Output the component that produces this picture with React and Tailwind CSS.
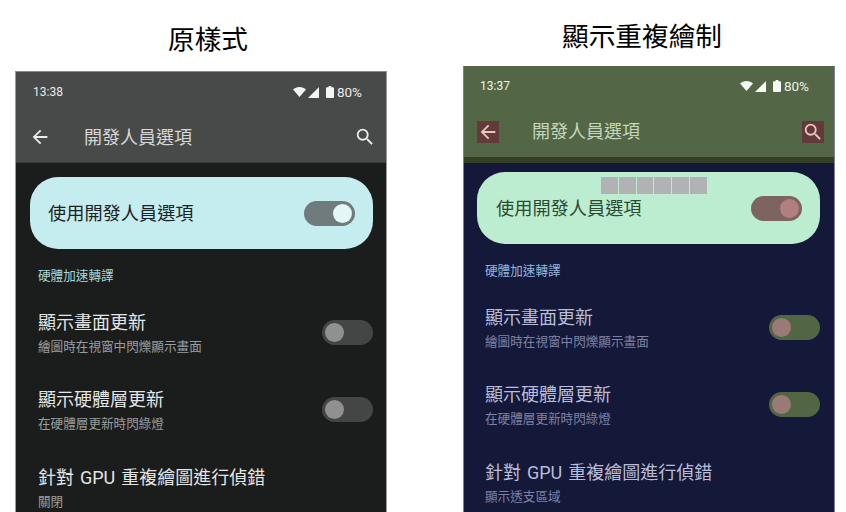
const CJK = { fontFamily: '"Roboto","Noto Sans CJK TC",sans-serif' };

const themes = {
  left: {
    frame: "border-x border-t border-x-[#9a9b9b] border-t-[#8a8b8b]",
    header: "bg-[#484a49] h-[90px]", body: "bg-[#1b1d1c]", status: "text-[#ebebeb]", iconFill: "#f4f4f4",
    title: "text-[#d6d7d7] leading-[24px]", action: "#ebebeb", actionBox: "",
    card: "bg-[#c5ecef] pl-[18px]", cardText: "text-[#1b2324]",
    onTrack: "bg-[#6f7b7c]", onThumb: "bg-[#e4f6f7]",
    offTrack: "bg-[#444645]", offThumb: "bg-[#8f908f]",
    section: "text-[#a7d6da]", item: "text-[#e4e5e5]", sub: "text-[#9b9d9c]",
    cardMargin: "ml-[14px] mr-[13px]", rowPad: "pl-[22px] pr-[13px]", sectionPad: "pl-[22px]",
    statusPad: "pl-[17px] pr-[24px]", barPad: "pl-[13px] pr-[10px] pt-[14px]",
    sep: "h-[1px] bg-[#3a3c3b]", bodyPad: "pt-[14px]",
  },
  right: {
    frame: "border-x border-x-[#7c809c]",
    header: "bg-[#536646] h-[91px]", body: "bg-[#141839]", status: "text-[#eff2ec]", iconFill: "#f6f8f4",
    title: "text-[#c5d6bd] leading-[22px]", action: "#eec4c0", actionBox: "bg-[#623a3a]",
    card: "bg-[#bdedd0] pl-[19px]", cardText: "text-[#2c4a33]",
    onTrack: "bg-[#7d6462]", onThumb: "bg-[#b0807c]",
    offTrack: "bg-[#526643]", offThumb: "bg-[#9a7a76]",
    section: "text-[#93b5dc]", item: "text-[#b9bdd8]", sub: "text-[#7e83a6]",
    cardMargin: "ml-[13px] mr-[14px]", rowPad: "pl-[21px] pr-[14px]", sectionPad: "pl-[21px]",
    statusPad: "pl-[16px] pr-[25px]", barPad: "pl-[13px] pr-[10px] pt-[15px]",
    sep: "h-[6px] bg-[#334026]", bodyPad: "pt-[9px]",
  },
};

function Toggle({ on, t, className = "" }) {
  return (
    <div className={`flex h-[25px] w-[51px] shrink-0 items-center rounded-full px-[3px] ${on ? `justify-end ${t.onTrack}` : `justify-start ${t.offTrack}`} ${className}`}>
      <div className={`h-[19px] w-[19px] rounded-full ${on ? t.onThumb : t.offThumb}`} />
    </div>
  );
}

function StatusIcons({ fill }) {
  return (
    <div className="flex items-center">
      <svg width="13" height="10" viewBox="0 0 13 10" className="mr-[2px]"><path d="M0 2.6C1.7 1 4 0 6.5 0S11.3 1 13 2.6L6.5 10z" fill={fill} /></svg>
      <svg width="11" height="11" viewBox="0 0 11 11" className="mr-[7px]"><path d="M11 0v11H0z" fill={fill} /></svg>
      <svg width="8" height="12" viewBox="0 0 8 12" className="mr-[3px]"><path d="M2.6 0h2.8v1.2H7a1 1 0 0 1 1 1V11a1 1 0 0 1-1 1H1a1 1 0 0 1-1-1V2.2a1 1 0 0 1 1-1h1.6z" fill={fill} /></svg>
    </div>
  );
}

function IconBox({ t, d }) {
  return (
    <div className={`flex h-[22px] w-[22px] shrink-0 items-center justify-center ${t.actionBox}`}>
      <svg width="22" height="22" viewBox="0 0 24 24"><path d={d} fill={t.action} /></svg>
    </div>
  );
}

function Row({ t, title, sub, toggle }) {
  return (
    <div className={`flex h-[77.5px] items-center justify-between ${t.rowPad}`}>
      <div className="whitespace-nowrap">
        <div className={`text-[18px] leading-[24px] [word-spacing:1.5px] ${t.item}`}>{title}</div>
        <div className={`text-[12.6px] leading-[24px] ${t.sub}`}>{sub}</div>
      </div>
      {toggle && <Toggle t={t} className="mb-[5px]" />}
    </div>
  );
}

function Phone({ variant, time, lastSub, overlay, heading, headingH, headingClass }) {
  const t = themes[variant];
  return (
    <div className="flex w-[372px] shrink-0 flex-col">
      <div className={`flex shrink-0 items-center justify-center text-[26.67px] leading-none text-black ${headingClass}`} style={{ height: headingH }}>{heading}</div>
      <div className={`box-border flex h-[500px] shrink-0 flex-col ${t.frame} ${t.body}`}>
        <div className={`shrink-0 ${t.header}`}>
          <div className={`flex h-[40px] items-center justify-between ${t.statusPad} ${t.status}`} style={{ fontFamily: '"Roboto",sans-serif' }}>
            <span className="text-[12px]">{time}</span>
            <div className="flex items-center"><StatusIcons fill={t.iconFill} /><span className="text-[13.5px]">80%</span></div>
          </div>
          <div className={`flex items-start ${t.barPad}`}>
            <IconBox t={t} d="M20 11H7.83l5.59-5.59L12 4l-8 8 8 8 1.41-1.41L7.83 13H20v-2z" />
            <div className={`ml-[33px] flex-1 text-[18px] ${t.title}`}>開發人員選項</div>
            <IconBox t={t} d="M15.5 14h-.79l-.28-.27A6.471 6.471 0 0 0 16 9.5 6.5 6.5 0 1 0 9.5 16c1.61 0 3.09-.59 4.23-1.57l.27.28v.79l5 4.99L20.49 19l-4.99-5zm-6 0C7.01 14 5 11.99 5 9.5S7.01 5 9.5 5 14 7.01 14 9.5 11.99 14 9.5 14z" />
          </div>
        </div>
        <div className={`shrink-0 ${t.sep}`} />
        <div className={t.bodyPad}>
          <div className={`relative flex h-[72px] items-center justify-between rounded-[28px] pr-[18px] ${t.cardMargin} ${t.card}`}>
            <span className={`mt-[2px] text-[18.2px] ${t.cardText}`}>使用開發人員選項</span>
            <Toggle on t={t} />
            {overlay && (
              <div className="absolute left-[124px] top-[5px] flex h-[17px]">
                {[0, 1, 2, 3, 4, 5].map((i) => <div key={i} className="h-[17px] w-[17.8px] border-r border-[#bdedd0] bg-[#b2b2b4]" />)}
              </div>
            )}
          </div>
          <div className={`mt-[17px] text-[12.6px] leading-[20px] ${t.sectionPad} ${t.section}`}>硬體加速轉譯</div>
          <div className="mt-[10px]">
            <Row t={t} title="顯示畫面更新" sub="繪圖時在視窗中閃爍顯示畫面" toggle />
            <Row t={t} title="顯示硬體層更新" sub="在硬體層更新時閃綠燈" toggle />
            <Row t={t} title="針對 GPU 重複繪圖進行偵錯" sub={lastSub} />
          </div>
        </div>
      </div>
    </div>
  );
}

export default function App() {
  return (
    <div className="flex h-[512px] w-[846px] gap-[76px] overflow-hidden bg-white pl-[15px]" style={CJK}>
      <Phone variant="left" time="13:38" lastSub="關閉" heading="原樣式" headingH={71} headingClass="pt-[9px] pl-[14px]" />
      <Phone variant="right" time="13:37" lastSub="顯示透支區域" heading="顯示重複繪制" headingH={66} headingClass="pt-[8px] pr-[14px]" overlay />
    </div>
  );
}
